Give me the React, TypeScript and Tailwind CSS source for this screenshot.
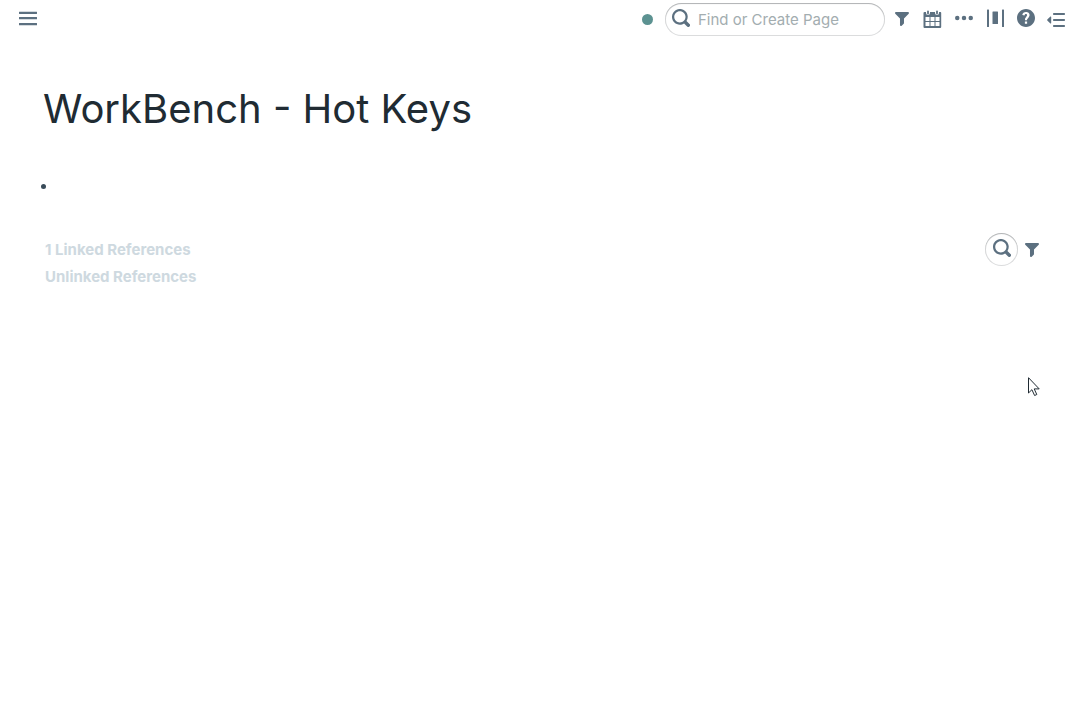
import type { ReactNode } from "react";

const SEARCH_PATH =
  "M15.55 13.43l-2.67-2.68a6.94 6.94 0 001.11-3.76c0-3.87-3.13-7-7-7s-7 3.13-7 7 3.13 7 7 7c1.39 0 2.68-.42 3.76-1.11l2.68 2.67a1.498 1.498 0 102.12-2.12zm-8.56-1.44c-2.76 0-5-2.24-5-5s2.24-5 5-5 5 2.24 5 5-2.24 5-5 5z";
const FILTER_PATH =
  "M13.99.99h-12a1.003 1.003 0 00-.71 1.71l4.71 4.71V14a1.003 1.003 0 001.71.71l2-2c.18-.18.29-.43.29-.71V7.41L14.7 2.7a1.003 1.003 0 00-.71-1.71z";
const MORE_PATH =
  "M2 6.03a2 2 0 100 4 2 2 0 100-4zM14 6.03a2 2 0 100 4 2 2 0 100-4zM8 6.03a2 2 0 100 4 2 2 0 100-4z";
const HELP_PATH =
  "M8 0C3.58 0 0 3.58 0 8s3.58 8 8 8 8-3.58 8-8-3.58-8-8-8zm1 13H7v-2h2v2zm1.93-6.48c-.14.32-.35.64-.62.97L9.25 8.83c-.12.15-.24.29-.28.42-.04.13-.09.3-.09.52V10H7.12V8.88s.05-.51.21-.71L8.4 6.73c.22-.26.35-.49.44-.68.09-.19.12-.38.12-.58 0-.3-.1-.55-.28-.75-.18-.19-.44-.28-.76-.28-.33 0-.59.1-.78.29-.19.19-.33.46-.4.81-.03.11-.1.15-.2.14l-1.7-.25c-.12-.01-.16-.08-.14-.19.12-.82.46-1.47 1.03-1.94.57-.48 1.32-.72 2.25-.72.47 0 .9.07 1.29.22s.72.34 1 .59c.28.25.49.55.65.89.15.35.22.72.22 1.12s-.07.75-.21 1.08z";

function Glyph({ path, className }: { path: string; className: string }) {
  return (
    <svg viewBox="0 0 16 16" fill="currentColor" aria-hidden="true" className={className}>
      <path d={path} fillRule="evenodd" />
    </svg>
  );
}

function Drawing({ children }: { children: ReactNode }) {
  return (
    <svg
      viewBox="0 0 18 18"
      fill="currentColor"
      aria-hidden="true"
      className="size-[18px] overflow-visible"
    >
      {children}
    </svg>
  );
}

function IconButton({ label, children }: { label: string; children: ReactNode }) {
  return (
    <button
      type="button"
      aria-label={label}
      className="flex size-[30px] items-center justify-center rounded text-[#5c7080]"
    >
      {children}
    </button>
  );
}

function TopBar() {
  return (
    <header className="flex items-start justify-between pt-[3px] pr-[9px] pl-[13px]">
      <IconButton label="Open menu">
        <Drawing>
          <rect x="0" y="2.700" width="18" height="2.200" rx="0.3" />
          <rect x="0" y="8" width="18" height="2.200" rx="0.3" />
          <rect x="0" y="14" width="18" height="2.200" rx="0.3" />
        </Drawing>
      </IconButton>
      <div className="flex items-start gap-px">
        <span className="mt-[11px] mr-[11px] size-[11px] rounded-full bg-[#5c9291]" />
        <label className="flex h-[33px] w-[220px] items-center gap-2 rounded-full bg-white pl-[7px] text-[#5c7080] shadow-[inset_0_0_0_1px_rgba(16,22,26,0.15),inset_0_1px_1px_rgba(16,22,26,0.2)]">
          <Glyph path={SEARCH_PATH} className="mb-1 size-[18px] shrink-0" />
          <input
            type="text"
            aria-label="Find or Create Page"
            placeholder="Find or Create Page"
            className="w-full min-w-0 bg-transparent pt-[2px] text-[15px] text-[#182026] outline-none placeholder:text-[#a3adb0]"
          />
        </label>
        <IconButton label="Filter">
          <Glyph path={FILTER_PATH} className="mt-[2px] ml-px size-4" />
        </IconButton>
        <IconButton label="Daily notes">
          <Drawing>
            <path
              fillRule="evenodd"
              d="M1.500 3H3v1a2 2 0 004 0V3h5v1a2 2 0 004 0V3h1.500a1 1 0 01.7 1v14a1 1 0 01-1 1H1.500a1 1 0 01-1-1V4a1 1 0 011-1zM2.500 8v4h4V8zM7.500 8v4h4V8zM12.500 8v4h4V8zM2.500 13v4h4v-4zM7.500 13v4h4v-4zM12.500 13v4h4v-4z"
            />
            <rect x="4.100" y="1.500" width="1.800" height="4" rx="0.900" />
            <rect x="13.100" y="1.500" width="1.800" height="4" rx="0.900" />
          </Drawing>
        </IconButton>
        <IconButton label="More options">
          <Glyph path={MORE_PATH} className="ml-px size-[18px]" />
        </IconButton>
        <IconButton label="Page width">
          <Drawing>
            <rect x="2" y="0.500" width="2" height="17.500" rx="0.5" />
            <rect x="7.500" y="2.500" width="5.500" height="12.500" rx="0.5" />
            <rect x="17" y="0.500" width="2" height="17.500" rx="0.5" />
          </Drawing>
        </IconButton>
        <IconButton label="Help">
          <Glyph path={HELP_PATH} className="ml-px size-[18px]" />
        </IconButton>
        <IconButton label="Open right sidebar">
          <Drawing>
            <path d="M4.200 8v6a.5.5 0 01-.8.4L.3 11.400a.6.6 0 010-.8L3.400 7.600a.5.5 0 01.8.4z" />
            <rect x="6" y="4" width="12" height="2" rx="0.8" />
            <rect x="6" y="10" width="12" height="2" rx="0.8" />
            <rect x="6" y="16" width="12" height="2" rx="0.8" />
          </Drawing>
        </IconButton>
      </div>
    </header>
  );
}

function References() {
  return (
    <section className="mt-11 flex items-start justify-between text-[15px] leading-[27px] font-bold text-[#ced9e0]">
      <div className="pt-[3px] pl-[2px]">
        <h2>1 Linked References</h2>
        <h2>Unlinked References</h2>
      </div>
      <div className="flex items-center gap-[6px] text-[#5c7080]">
        <button
          type="button"
          aria-label="Search references"
          className="flex size-[33px] items-center justify-center rounded-full shadow-[inset_0_0_0_1px_rgba(16,22,26,0.15),inset_0_1px_1px_rgba(16,22,26,0.2)]"
        >
          <Glyph path={SEARCH_PATH} className="mb-[3px] size-[18px]" />
        </button>
        <button type="button" aria-label="Filter references">
          <Glyph path={FILTER_PATH} className="size-4" />
        </button>
      </div>
    </section>
  );
}

export default function App() {
  return (
    <div className="min-h-screen bg-white font-['Inter',sans-serif]">
      <TopBar />
      <main className="pt-[49px] pr-10 pl-[43px]">
        <h1 className="text-[40px] leading-[48px] text-[#202b33]">WorkBench - Hot Keys</h1>
        <ul className="mt-[51px] -ml-[2px]">
          <li className="size-[5px] rounded-full bg-[#394b59]" />
        </ul>
        <References />
      </main>
      <svg
        viewBox="0 0 12 20"
        aria-hidden="true"
        className="pointer-events-none absolute top-[377px] right-10 h-5 w-3"
      >
        <path
          d="M.5.700v15.300l3.400-3.300 2.700 5.800 2.200-1-2.600-5.600h5z"
          fill="#fff"
          stroke="#202b33"
          strokeWidth="1"
        />
      </svg>
    </div>
  );
}
